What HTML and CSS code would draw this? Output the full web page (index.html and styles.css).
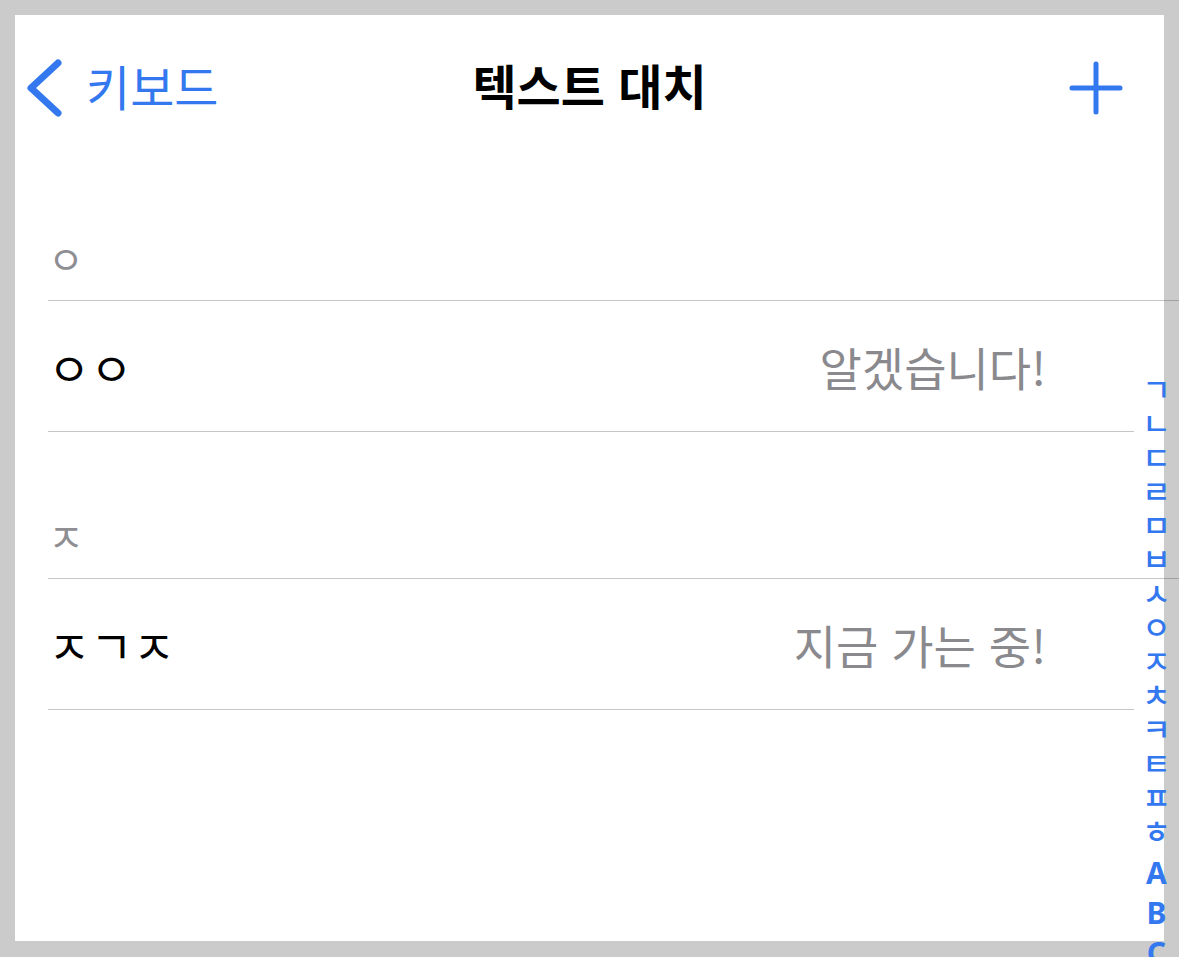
FILE: index.html
```html
<!DOCTYPE html>
<html lang="ko">
<head>
	<meta charset="UTF-8">
	<title>텍스트 대치</title>
	<link rel="stylesheet" href="styles.css">
</head>
<body>
	<div id="screen">
		<div id="navbar">
			<a class="back" href="#">
				<svg width="40" height="60" viewBox="0 0 40 60"><path d="M34 5 L7 30 L34 55" fill="none" stroke="currentColor" stroke-width="7" stroke-linecap="round" stroke-linejoin="round"/></svg>
				<span>키보드</span>
			</a>
			<h1 class="title">텍스트 대치</h1>
			<a class="add" href="#">
				<svg width="56" height="56" viewBox="0 0 56 56"><path d="M28 4 V52 M4 28 H52" fill="none" stroke="currentColor" stroke-width="5" stroke-linecap="round"/></svg>
			</a>
		</div>

		<div id="list">
			<div class="section-head first"><span>ㅇ</span></div>
			<div class="row">
				<span class="shortcut">ㅇㅇ</span>
				<span class="phrase">알겠습니다!</span>
			</div>

			<div class="section-head"><span>ㅈ</span></div>
			<div class="row">
				<span class="shortcut">ㅈㄱㅈ</span>
				<span class="phrase">지금 가는 중!</span>
			</div>
		</div>

		<!-- 오른쪽 색인 -->
		<ul id="index">
			<li>ㄱ</li><li>ㄴ</li><li>ㄷ</li><li>ㄹ</li><li>ㅁ</li><li>ㅂ</li><li>ㅅ</li>
			<li>ㅇ</li><li>ㅈ</li><li>ㅊ</li><li>ㅋ</li><li>ㅌ</li><li>ㅍ</li><li>ㅎ</li>
			<li class="latin first">A</li><li class="latin">B</li><li class="latin">C</li>
		</ul>
	</div>
</body>
</html>
```

FILE: styles.css
```css
* {
	margin: 0;
	padding: 0;
	box-sizing: border-box;
}

html, body {
	height: 100%;
	overflow: hidden;
}

body {
	background: #cbcbcb;
	font-family: "Noto Sans CJK KR", "Noto Sans", sans-serif;
}

#screen {
	position: relative;
	width: 1149px;
	height: 926px;
	margin: 15px 0 0 15px;
	background: #fff;
}

#navbar {
	display: grid;
	grid-template-columns: 1fr auto 1fr;
	align-items: center;
	height: 139px;
	padding-top: 7px;
}

#navbar a {
	color: #3478f0;
	text-decoration: none;
}

.back {
	display: flex;
	align-items: center;
	gap: 22px;
	margin-left: 9px;
	font-size: 48px;
	line-height: 1;
}

.back span {
	margin-bottom: 6px;
}

.back svg,
.add svg {
	display: block;
}

.title {
	margin-bottom: 9px;
	font-size: 48px;
	font-weight: 700;
	line-height: 1;
	color: #000;
}

.add {
	justify-self: end;
	margin-right: 40px;
}

#list {
	margin: 0 -15px 0 33px;
}

.section-head {
	display: flex;
	align-items: flex-end;
	height: 147px;
	padding-bottom: 23px;
	border-bottom: 1px solid rgba(60, 60, 67, 0.29);
	font-size: 39px;
	line-height: 1;
	color: #8e8e93;
}

.row {
	display: flex;
	align-items: center;
	justify-content: space-between;
	height: 131px;
	margin-right: 45px;
	padding-right: 88px;
	border-bottom: 1px solid rgba(60, 60, 67, 0.29);
	font-size: 46px;
	line-height: 1;
}

.shortcut {
	color: #000;
}

.phrase {
	color: #8a8a8e;
}

#index {
	position: absolute;
	top: 356px;
	left: 1119px;
	width: 45px;
	list-style: none;
	text-align: center;
	color: #3478f0;
}

#index li {
	height: 34px;
	font-size: 31px;
	line-height: 34px;
	font-weight: 500;
}

#index li.latin {
	height: 40px;
	font-family: "Noto Sans", sans-serif;
	font-size: 30px;
	line-height: 40px;
	font-weight: 700;
}

#index li.first {
	margin-top: 6px;
}
```
